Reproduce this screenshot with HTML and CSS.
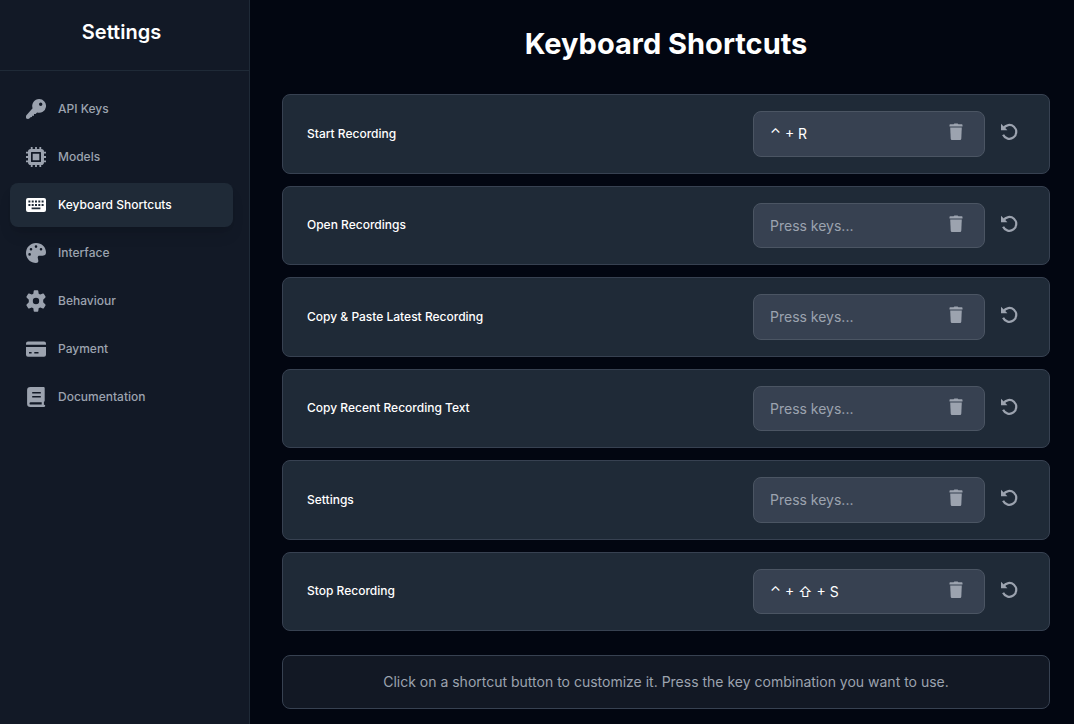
FILE: index.html
```html
<!DOCTYPE html>
<html lang="en">
<head>
    <meta charset="UTF-8">
    <meta name="viewport" content="width=device-width, initial-scale=1.0">
    <title>Settings - Keyboard Shortcuts</title>
    <link rel="stylesheet" href="styles.css">
</head>
<body>
    <!-- Shared row icons -->
    <svg class="sprite" aria-hidden="true">
        <symbol id="trash" viewBox="0 0 16 18">
            <path d="M5.6 1.2 6.4.4h3.2l.8.8h3.4c.4 0 .7.3.7.7v1.6h-13V1.900c0-.4.3-.7.7-.7z"/>
            <path d="M2.200 4.600h11.600l-.5 10.800c-.1 1-.7 1.600-1.600 1.600H4.300c-.9 0-1.500-.6-1.600-1.600z"/>
        </symbol>
        <symbol id="reset" viewBox="0 0 18 18">
            <path d="M1 .8v6.400h6.400L5.300 5z"/>
            <path d="M3.400 5.400A6.900 6.900 0 1 1 3.100 11.800" fill="none" stroke="currentColor" stroke-width="2.2"/>
        </symbol>
    </svg>

    <div class="layout">
        <aside class="sidebar">
            <h2 class="sidebar-title">Settings</h2>
            <nav class="nav">
                <a class="nav-item" href="#api-keys">
                    <svg viewBox="0 0 20 20"><path fill-rule="evenodd" d="M13.100 0a6.900 6.900 0 1 1-2 13.500L9.600 15H8v1.700H6.300L5.900 18 4.500 18.200 3.300 19.600C2.800 20 .8 20 .3 19.400-.2 18.800-.1 16.800.4 16.200L6.600 9.200A6.900 6.900 0 0 1 13.100 0zM14.700 3.600a1.700 1.700 0 1 0 0 3.400 1.700 1.700 0 0 0 0-3.400z"/></svg>
                    API Keys
                </a>
                <a class="nav-item" href="#models">
                    <svg viewBox="0 0 20 20"><path fill-rule="evenodd" d="M4.800 0h1.800v2h2.500V0h1.800v2h2.500V0h1.800v2A2.800 2.800 0 0 1 18 4.800h2v1.800h-2v2.500h2v1.800h-2v2.500h2v1.800h-2a2.800 2.800 0 0 1-2.800 2.800v2h-1.800v-2h-2.500v2H9.100v-2H6.600v2H4.800v-2A2.800 2.800 0 0 1 2 15.200H0v-1.800h2v-2.500H0V9.100h2V6.600H0V4.800h2A2.800 2.800 0 0 1 4.800 2zM5.600 5a.6.6 0 0 0-.6.6v8.800c0 .3.300.6.6.6h8.800c.3 0 .6-.3.6-.6V5.600a.6.6 0 0 0-.6-.6zM6.700 6.700h6.600v6.600H6.700z"/></svg>
                    Models
                </a>
                <a class="nav-item active" href="#shortcuts">
                    <svg viewBox="0 0 20 20"><path fill-rule="evenodd" d="M2 3h16a2 2 0 0 1 2 2v10a2 2 0 0 1-2 2H2a2 2 0 0 1-2-2V5a2 2 0 0 1 2-2zM2.400 5.500v2h2v-2zm3.300 0v2h2v-2zm3.300 0v2h2v-2zm3.300 0v2h2v-2zm3.300 0v2h2v-2zM2.400 9v2h2V9zm3.300 0v2h2V9zm3.300 0v2h2V9zm3.300 0v2h2V9zm3.300 0v2h2V9zM5.600 12.600v1.700h8.800v-1.700z"/></svg>
                    Keyboard Shortcuts
                </a>
                <a class="nav-item" href="#interface">
                    <svg viewBox="0 0 20 20"><path fill-rule="evenodd" d="M10 0c5.800 0 10 4.200 10 9.300 0 2.600-1.500 3.400-3.500 3.400h-3c-1.500 0-2 .9-1.700 2.200l.5 2.600c.3 1.600-.7 2.500-2.300 2.500C4.500 20 0 15.600 0 10S4.500 0 10 0zM10 2.300a1.300 1.300 0 1 0 0 2.600 1.300 1.300 0 0 0 0-2.600zM5 4.900a1.300 1.300 0 1 0 0 2.600 1.300 1.300 0 0 0 0-2.600zM15 4.900a1.300 1.300 0 1 0 0 2.600 1.300 1.300 0 0 0 0-2.600zM3.600 10.100a1.300 1.300 0 1 0 0 2.600 1.300 1.300 0 0 0 0-2.600z"/></svg>
                    Interface
                </a>
                <a class="nav-item" href="#behaviour">
                    <svg class="gear" viewBox="0 0 20 22"><path fill-rule="evenodd" stroke="currentColor" stroke-width="1.600" stroke-linejoin="round" d="M8.500 1h3l.4 3.200 2.200 1.300 3-1.300L18.800 7l-2.400 2.400v3.200l2.400 2.400-1.700 2.800-3-1.300-2.200 1.300-.4 3.200h-3l-.4-3.200-2.200-1.300-3 1.300L1.200 15l2.400-2.400V9.400L1.200 7l1.700-2.800 3 1.300 2.200-1.300zM10 7a4 4 0 1 0 0 8 4 4 0 0 0 0-8z"/></svg>
                    Behaviour
                </a>
                <a class="nav-item" href="#payment">
                    <svg viewBox="0 0 20 20"><path fill-rule="evenodd" d="M2 2.400h16a2 2 0 0 1 2 2v1.400H0V4.400a2 2 0 0 1 2-2zM0 8h20v7.700a2 2 0 0 1-2 2H2a2 2 0 0 1-2-2zM3 13.100v1.500h2.600v-1.500zM8.300 13.100v1.500h4.200v-1.500z"/></svg>
                    Payment
                </a>
                <a class="nav-item" href="#documentation">
                    <svg viewBox="0 0 20 20"><path fill-rule="evenodd" d="M4.400 0H17.500c.7 0 1.200.5 1.200 1.200v12.500c0 .5-.3.900-.8 1.100v2.900h.2a1.100 1.100 0 0 1 0 2.300H4.400a3.300 3.300 0 0 1-3.300-3.300V3.300A3.300 3.300 0 0 1 4.400 0zM4.700 15.200a1.200 1.200 0 0 0 0 2.400h11v-2.400zM6.200 5v1.500h8.600V5zM6.200 9v1.500h8.600V9z"/></svg>
                    Documentation
                </a>
            </nav>
        </aside>

        <main class="content">
            <h1 class="page-title">Keyboard Shortcuts</h1>

            <div class="shortcuts">
                <div class="shortcut">
                    <label for="start">Start Recording</label>
                    <div class="key-box">
                        <input type="text" id="start" value="⌃ + R" placeholder="Press keys..." readonly>
                        <button type="button" aria-label="Clear"><svg class="icon-trash"><use href="#trash"/></svg></button>
                    </div>
                    <button type="button" aria-label="Reset"><svg class="icon-reset"><use href="#reset"/></svg></button>
                </div>
                <div class="shortcut">
                    <label for="open">Open Recordings</label>
                    <div class="key-box">
                        <input type="text" id="open" placeholder="Press keys..." readonly>
                        <button type="button" aria-label="Clear"><svg class="icon-trash"><use href="#trash"/></svg></button>
                    </div>
                    <button type="button" aria-label="Reset"><svg class="icon-reset"><use href="#reset"/></svg></button>
                </div>
                <div class="shortcut">
                    <label for="paste">Copy &amp; Paste Latest Recording</label>
                    <div class="key-box">
                        <input type="text" id="paste" placeholder="Press keys..." readonly>
                        <button type="button" aria-label="Clear"><svg class="icon-trash"><use href="#trash"/></svg></button>
                    </div>
                    <button type="button" aria-label="Reset"><svg class="icon-reset"><use href="#reset"/></svg></button>
                </div>
                <div class="shortcut">
                    <label for="copy">Copy Recent Recording Text</label>
                    <div class="key-box">
                        <input type="text" id="copy" placeholder="Press keys..." readonly>
                        <button type="button" aria-label="Clear"><svg class="icon-trash"><use href="#trash"/></svg></button>
                    </div>
                    <button type="button" aria-label="Reset"><svg class="icon-reset"><use href="#reset"/></svg></button>
                </div>
                <div class="shortcut">
                    <label for="settings">Settings</label>
                    <div class="key-box">
                        <input type="text" id="settings" placeholder="Press keys..." readonly>
                        <button type="button" aria-label="Clear"><svg class="icon-trash"><use href="#trash"/></svg></button>
                    </div>
                    <button type="button" aria-label="Reset"><svg class="icon-reset"><use href="#reset"/></svg></button>
                </div>
                <div class="shortcut">
                    <label for="stop">Stop Recording</label>
                    <div class="key-box">
                        <input type="text" id="stop" value="⌃ + ⇧ + S" placeholder="Press keys..." readonly>
                        <button type="button" aria-label="Clear"><svg class="icon-trash"><use href="#trash"/></svg></button>
                    </div>
                    <button type="button" aria-label="Reset"><svg class="icon-reset"><use href="#reset"/></svg></button>
                </div>
            </div>

            <p class="hint">Click on a shortcut button to customize it. Press the key combination you want to use.</p>
        </main>
    </div>
</body>
</html>
```
FILE: styles.css
```css
* {
    box-sizing: border-box;
}
body {
    margin: 0;
    background: #020611;
    color: #fff;
    font-family: Inter, "DejaVu Sans", sans-serif;
    font-size: 14px;
}
.sprite {
    display: none;
}
svg {
    display: block;
    fill: currentColor;
}
.layout {
    display: flex;
    min-height: 100vh;
}

/* Sidebar */
.sidebar {
    flex: none;
    width: 250px;
    background: #121926;
    border-right: 1px solid #1f2a37;
}
.sidebar-title {
    margin: 0;
    padding: 20px 16px 26px 10px;
    border-bottom: 1px solid #1f2a37;
    font-size: 20px;
    font-weight: 600;
    line-height: 24px;
    text-align: center;
}
.nav {
    display: flex;
    flex-direction: column;
    gap: 4px;
    padding: 16px 16px 16px 10px;
}
.nav-item {
    display: flex;
    align-items: center;
    gap: 12px;
    height: 44px;
    padding: 0 16px;
    border-radius: 8px;
    color: #9ca3af;
    font-size: 12px;
    font-weight: 500;
    line-height: 16px;
    text-decoration: none;
}
.nav-item svg {
    width: 20px;
    height: 20px;
}
.nav-item svg.gear {
    height: 22px;
}
.nav-item.active {
    background: #1f2a37;
    color: #fff;
    box-shadow: 0 10px 15px -3px rgba(0, 0, 0, 0.1), 0 4px 6px -4px rgba(0, 0, 0, 0.1);
}

/* Content */
.content {
    flex: 1;
    min-width: 0;
    padding: 26px 24px 15px 32px;
}
.page-title {
    margin: 0 0 32px;
    font-size: 29px;
    font-weight: 700;
    line-height: 36px;
    text-align: center;
}
.shortcuts {
    display: flex;
    flex-direction: column;
    gap: 12px;
}
.shortcut {
    display: flex;
    align-items: center;
    padding: 16px 24px;
    background: #1f2a37;
    border: 1px solid #374151;
    border-radius: 8px;
}
.shortcut label {
    flex: 1;
    font-size: 12px;
    font-weight: 500;
    line-height: 16px;
}
.key-box {
    display: flex;
    align-items: center;
    width: 232px;
    padding: 13px 20px 13px 16px;
    background: #374151;
    border: 1px solid #4b5563;
    border-radius: 8px;
}
.key-box input {
    flex: 1;
    min-width: 0;
    padding: 0;
    border: 0;
    outline: 0;
    background: none;
    color: #fff;
    font: inherit;
    line-height: 1.25;
    cursor: pointer;
}
.key-box input::placeholder {
    color: #9ca3af;
    opacity: 1;
}
.shortcut button {
    padding: 0 0 3px;
    border: 0;
    background: none;
    color: #9ca3af;
    cursor: pointer;
}
.shortcut > button {
    margin: 0 7px 0 15px;
}
.key-box button {
    margin: -4px 0;
}
.icon-trash {
    width: 16px;
    height: 18px;
}
.icon-reset {
    width: 18px;
    height: 18px;
}

.hint {
    margin: 24px 0 0;
    padding: 16px;
    background: #121824;
    border: 1px solid #374151;
    border-radius: 8px;
    color: #9ca3af;
    line-height: 20px;
    text-align: center;
}
```
